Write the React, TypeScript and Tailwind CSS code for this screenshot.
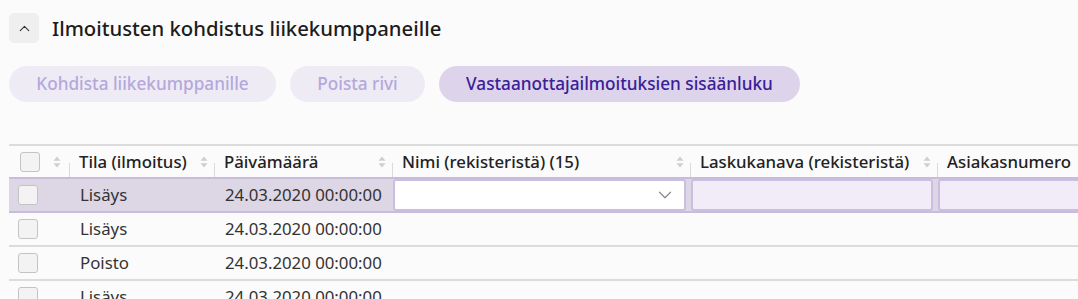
import { ChevronUp, ChevronDown } from 'lucide-react';

const font = { fontFamily: '"Noto Sans", "Open Sans", sans-serif' };

type Row = { tila: string; pvm: string };

const rows: Row[] = [
  { tila: 'Lisäys', pvm: '24.03.2020 00:00:00' },
  { tila: 'Lisäys', pvm: '24.03.2020 00:00:00' },
  { tila: 'Poisto', pvm: '24.03.2020 00:00:00' },
  { tila: 'Lisäys', pvm: '24.03.2020 00:00:00' },
];

function SortIcon() {
  return (
    <svg width="8" height="12" viewBox="0 0 8 12" className="shrink-0">
      <path d="M4 0.5 L7.5 4.8 H0.5 Z" fill="#cfcfcf" />
      <path d="M4 11.5 L7.5 7.2 H0.5 Z" fill="#cfcfcf" />
    </svg>
  );
}

function Checkbox() {
  return <div className="w-[20px] h-[20px] rounded-[3px] border-[1.5px] border-[#c4c4c4] bg-[#f3f3f3]" />;
}

function Sep() {
  return <div className="absolute left-0 bottom-0 h-[14px] w-px bg-[#dadada]" />;
}

export default function App() {
  return (
    <div className="min-h-screen bg-[#fbfbfb] pl-[9px] pt-[13px] text-[#222]" style={font}>
      {/* Section header */}
      <div className="flex items-center gap-[13px]">
        <button className="w-[30px] h-[30px] rounded-[5px] bg-[#efefef] flex items-center justify-center text-[#333]">
          <ChevronUp className="w-[17px] h-[17px]" strokeWidth={1.5} />
        </button>
        <h2 className="text-[20.3px] font-medium leading-none text-[#1c1c1c]">
          Ilmoitusten kohdistus liikekumppaneille
        </h2>
      </div>

      {/* Actions */}
      <div className="flex items-center gap-[14px] mt-[23px]">
        <button className="h-[36px] w-[267px] rounded-full bg-[#efebf5] text-[#b4a8dc] text-[17.2px] font-medium">
          Kohdista liikekumppanille
        </button>
        <button className="h-[36px] w-[135px] rounded-full bg-[#efebf5] text-[#b4a8dc] text-[17.2px] font-medium">
          Poista rivi
        </button>
        <button className="h-[36px] w-[361px] rounded-full bg-[#ddd4ec] text-[#3a2097] text-[17.2px] font-medium">
          Vastaanottajailmoituksien sisäänluku
        </button>
      </div>

      {/* Table */}
      <div className="mt-[42px] overflow-hidden">
        <table className="border-collapse w-[1200px] table-fixed text-[16.8px]">
          <colgroup>
            <col className="w-[60px]" />
            <col className="w-[145px]" />
            <col className="w-[178px]" />
            <col className="w-[298px]" />
            <col className="w-[247px]" />
            <col className="w-[272px]" />
          </colgroup>
          <thead>
            <tr className="h-[33px]">
              <th className="border-t-2 border-[#dcdcdc] p-0 font-medium text-left">
                <div className="flex items-center pl-[11px] gap-[13px]">
                  <Checkbox />
                  <SortIcon />
                </div>
              </th>
              {['Tila (ilmoitus)', 'Päivämäärä', 'Nimi (rekisteristä) (15)', 'Laskukanava (rekisteristä)', 'Asiakasnumero'].map((h) => (
                <th key={h} className="relative border-t-2 border-[#dcdcdc] p-0 font-medium text-left text-[#222]">
                  <Sep />
                  <div className="flex items-center justify-between pl-[10px] pr-[6px] whitespace-nowrap">
                    <span>{h}</span>
                    <SortIcon />
                  </div>
                </th>
              ))}
            </tr>
          </thead>
          <tbody className="text-[#333]">
            {rows.map((r, i) => {
              const sel = i === 0;
              const cell = sel
                ? 'bg-[#ddd6e4] border-y-2 border-[#c8bbdc] p-0 h-[34px]'
                : 'border-b-2 border-[#dcdcdc] p-0 h-[34px]';
              return (
                <tr key={i}>
                  <td className={cell}>
                    <div className="pl-[9px]">
                      <Checkbox />
                    </div>
                  </td>
                  <td className={cell}>
                    <span className="pl-[11px]">{r.tila}</span>
                  </td>
                  <td className={cell}>
                    <span className="pl-[11px] whitespace-nowrap">{r.pvm}</span>
                  </td>
                  <td className={cell}>
                    {sel && (
                      <div className="ml-px h-[32px] w-[293px] rounded-[3px] border-2 border-[#cbbfe0] bg-white flex items-center justify-end pr-[8px]">
                        <ChevronDown className="w-[22px] h-[22px] text-[#8a8a8a]" strokeWidth={1.3} />
                      </div>
                    )}
                  </td>
                  <td className={cell}>
                    {sel && <div className="ml-px h-[32px] w-[242px] rounded-[3px] border-2 border-[#cbbfe0] bg-[#f2ecf9]" />}
                  </td>
                  <td className={cell}>
                    {sel && <div className="ml-px h-[32px] w-[268px] rounded-[3px] border-2 border-[#cbbfe0] bg-[#f2ecf9]" />}
                  </td>
                </tr>
              );
            })}
          </tbody>
        </table>
      </div>
    </div>
  );
}
